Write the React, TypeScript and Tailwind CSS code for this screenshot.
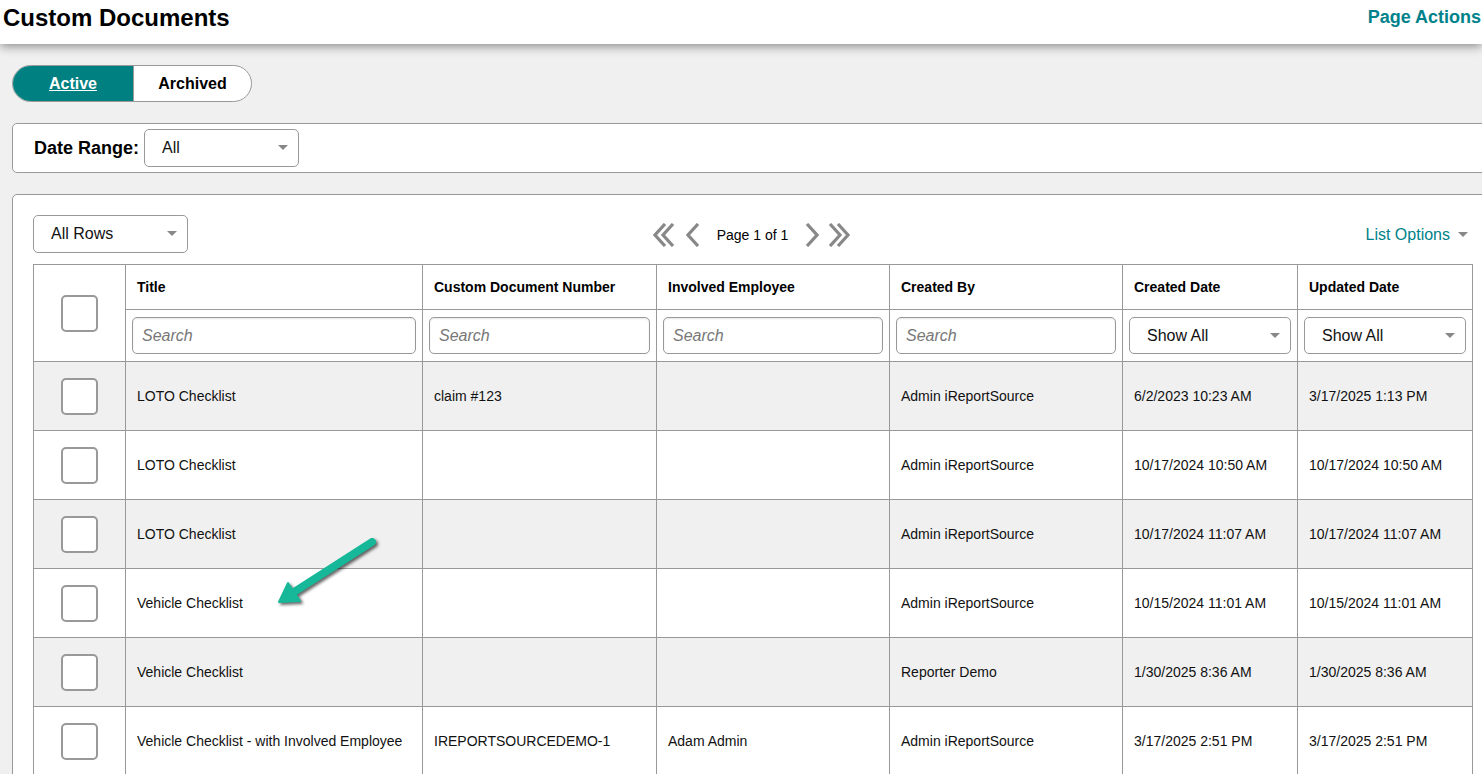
import React from "react"

interface DocRow {
  title: string
  number: string
  employee: string
  createdBy: string
  created: string
  updated: string
}

const rows: DocRow[] = [
  { title: "LOTO Checklist", number: "claim #123", employee: "", createdBy: "Admin iReportSource", created: "6/2/2023 10:23 AM", updated: "3/17/2025 1:13 PM" },
  { title: "LOTO Checklist", number: "", employee: "", createdBy: "Admin iReportSource", created: "10/17/2024 10:50 AM", updated: "10/17/2024 10:50 AM" },
  { title: "LOTO Checklist", number: "", employee: "", createdBy: "Admin iReportSource", created: "10/17/2024 11:07 AM", updated: "10/17/2024 11:07 AM" },
  { title: "Vehicle Checklist", number: "", employee: "", createdBy: "Admin iReportSource", created: "10/15/2024 11:01 AM", updated: "10/15/2024 11:01 AM" },
  { title: "Vehicle Checklist", number: "", employee: "", createdBy: "Reporter Demo", created: "1/30/2025 8:36 AM", updated: "1/30/2025 8:36 AM" },
  { title: "Vehicle Checklist - with Involved Employee", number: "IREPORTSOURCEDEMO-1", employee: "Adam Admin", createdBy: "Admin iReportSource", created: "3/17/2025 2:51 PM", updated: "3/17/2025 2:51 PM" },
]

const Caret = () => (
  <svg width="10" height="6" viewBox="0 0 10 6" className="shrink-0">
    <path d="M0 0 L10 0 L5 5 Z" fill="#888" />
  </svg>
)

const Select = ({ label, className }: { label: string; className: string }) => (
  <div
    className={
      "flex items-center justify-between bg-white border border-[#999] rounded-[5px] pl-[17px] pr-[10px] text-[16px] text-[#111] " +
      className
    }
  >
    <span>{label}</span>
    <Caret />
  </div>
)

const Box = () => <div className="w-[37px] h-[37px] mx-auto rounded-[5px] border-2 border-[#999] bg-white" />

const SearchBox = () => (
  <div className="h-[37px] border border-[#999] rounded-[5px] bg-white flex items-center px-[9px] text-[16px] italic text-[#777] shadow-[inset_0_1px_2px_rgba(0,0,0,0.1)]">
    Search
  </div>
)

const Chevron = ({ dir, double }: { dir: "l" | "r"; double?: boolean }) => {
  const w = double ? 24 : 14
  const pts = (x: number) => (dir === "l" ? `${x + 10},1 ${x},12 ${x + 10},23` : `${x},1 ${x + 10},12 ${x},23`)
  return (
    <svg width={w} height="24" viewBox={`0 0 ${w} 24`}>
      <polyline points={pts(2)} fill="none" stroke="#888" strokeWidth="3.2" />
      {double && <polyline points={pts(10)} fill="none" stroke="#888" strokeWidth="3.2" />}
    </svg>
  )
}

export default function App() {
  return (
    <div className="w-[1482px] h-[774px] overflow-hidden bg-[#f0f0f0] relative font-['Liberation_Sans',Arial,sans-serif] text-[#111]">
      <div className="h-[44px] bg-white flex items-center justify-between pl-[3px] shadow-[0_2px_10px_rgba(0,0,0,0.45)] relative z-10">
        <h1 className="text-[24px] font-bold text-black -mt-[8px]">Custom Documents</h1>
        <span className="text-[18px] font-bold text-[#00828a] -mt-[10px] whitespace-nowrap pr-[1px]">Page Actions</span>
      </div>

      <div className="pl-[12px] pt-[21px]">
        <div className="flex w-[240px] h-[37px] rounded-full border border-[#999] overflow-hidden bg-white text-[16px] font-bold">
          <div className="w-[120px] bg-[#008080] text-white underline flex items-center justify-center">Active</div>
          <div className="flex-1 border-l border-[#999] flex items-center justify-center text-black">Archived</div>
        </div>

        <div className="mt-[21px] w-[1500px] h-[50px] bg-white border border-[#999] rounded-[5px] flex items-center pl-[21px]">
          <span className="text-[18px] font-bold text-black mr-[5px]">Date Range:</span>
          <Select label="All" className="w-[155px] h-[38px]" />
        </div>

        <div className="mt-[21px] w-[1500px] h-[600px] bg-white border border-[#999] rounded-[5px] pl-[20px] pt-[20px]">
          <div className="w-[1439px] grid grid-cols-[1fr_auto_1fr] items-center h-[38px]">
            <Select label="All Rows" className="w-[155px] h-[38px]" />
            <div className="flex items-center gap-[9px] mt-[2px]">
              <Chevron dir="l" double />
              <Chevron dir="l" />
              <span className="text-[14px] text-black mx-[8px]">Page 1 of 1</span>
              <Chevron dir="r" />
              <Chevron dir="r" double />
            </div>
            <div className="flex items-center justify-end gap-[8px] text-[16px] text-[#00828a] mt-[2px] mr-[4px]">
              List Options
              <Caret />
            </div>
          </div>

          <table className="mt-[11px] border-collapse text-[14px] text-[#111] table-fixed w-[1439px]">
            <colgroup>
              <col className="w-[92px]" />
              <col className="w-[297px]" />
              <col className="w-[234px]" />
              <col className="w-[233px]" />
              <col className="w-[233px]" />
              <col className="w-[175px]" />
              <col className="w-[175px]" />
            </colgroup>
            <thead>
              <tr className="h-[45px]">
                <th rowSpan={2} className="border border-[#999]">
                  <Box />
                </th>
                {["Title", "Custom Document Number", "Involved Employee", "Created By", "Created Date", "Updated Date"].map((h) => (
                  <th key={h} className="border border-[#999] text-left font-bold px-[11px] text-black">
                    {h}
                  </th>
                ))}
              </tr>
              <tr className="h-[52px]">
                {[0, 1, 2, 3].map((i) => (
                  <td key={i} className="border border-[#999] px-[6px]">
                    <SearchBox />
                  </td>
                ))}
                <td className="border border-[#999] px-[6px]">
                  <Select label="Show All" className="h-[37px]" />
                </td>
                <td className="border border-[#999] px-[6px]">
                  <Select label="Show All" className="h-[37px]" />
                </td>
              </tr>
            </thead>
            <tbody>
              {rows.map((r, i) => (
                <tr key={i} className={i % 2 === 0 ? "h-[69px] bg-[#f0f0f0]" : "h-[69px] bg-white"}>
                  <td className="border border-[#999]">
                    <Box />
                  </td>
                  {[r.title, r.number, r.employee, r.createdBy, r.created, r.updated].map((v, j) => (
                    <td key={j} className="border border-[#999] px-[11px]">
                      {v}
                    </td>
                  ))}
                </tr>
              ))}
            </tbody>
          </table>
        </div>
      </div>

      <svg
        className="absolute left-[270px] top-[530px] drop-shadow-[2px_2px_1.5px_rgba(0,0,0,0.6)]"
        width="120"
        height="85"
        viewBox="0 0 120 85"
      >
        <line x1="102" y1="12" x2="24" y2="62" stroke="#17b899" strokeWidth="8" strokeLinecap="round" />
        <polygon points="9,72 30,71 18,53" fill="#17b899" stroke="#17b899" strokeWidth="2" strokeLinejoin="round" />
      </svg>
    </div>
  )
}
